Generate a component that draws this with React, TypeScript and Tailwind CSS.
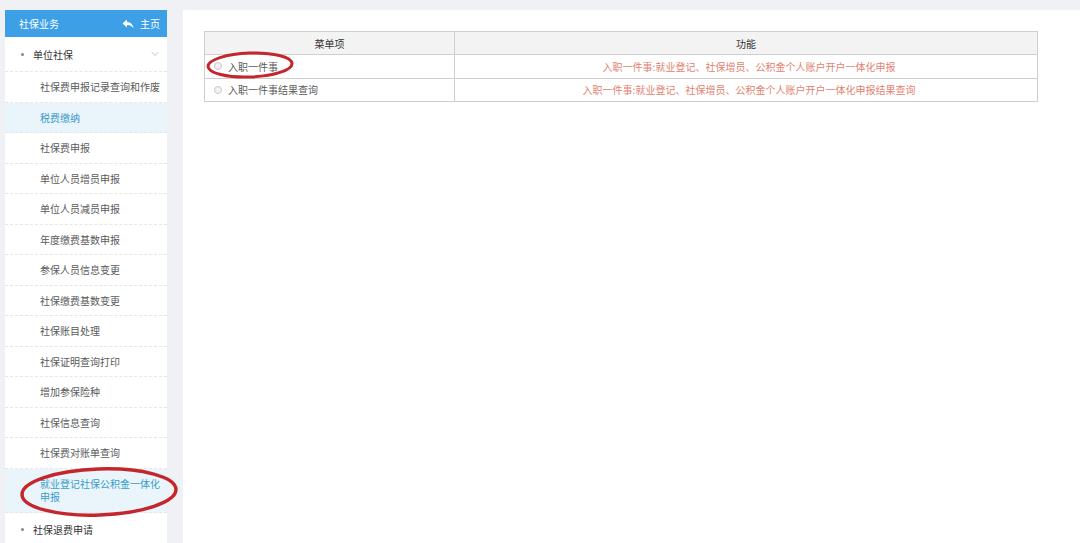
import React from 'react';
import { ChevronDown } from 'lucide-react';

const items: { label: string[]; active?: boolean }[] = [
  { label: ['社保费申报记录查询和作废'] },
  { label: ['税费缴纳'], active: true },
  { label: ['社保费申报'] },
  { label: ['单位人员增员申报'] },
  { label: ['单位人员减员申报'] },
  { label: ['年度缴费基数申报'] },
  { label: ['参保人员信息变更'] },
  { label: ['社保缴费基数变更'] },
  { label: ['社保账目处理'] },
  { label: ['社保证明查询打印'] },
  { label: ['增加参保险种'] },
  { label: ['社保信息查询'] },
  { label: ['社保费对账单查询'] },
  { label: ['就业登记社保公积金一体化', '申报'], active: true },
];

const rows = [
  { name: '入职一件事', desc: '入职一件事:就业登记、社保增员、公积金个人账户开户一体化申报' },
  { name: '入职一件事结果查询', desc: '入职一件事:就业登记、社保增员、公积金个人账户开户一体化申报结果查询' },
];

const ReplyIcon = () => (
  <svg width="12" height="10" viewBox="0 0 12 10" fill="white">
    <path d="M5 0.5 L0.5 4.5 L5 8.5 L5 6 C8 6 10 7 11.5 9.5 C11 5.5 8.5 3.2 5 3 Z" />
  </svg>
);

export default function App() {
  return (
    <div
      className="relative flex min-h-[543px] bg-[#eff1f4] pt-[10px] pl-[5px] text-[10px] text-[#5a5a5a]"
      style={{ fontFamily: '"Noto Sans CJK SC", "Noto Sans", sans-serif' }}
    >
      {/* sidebar */}
      <aside className="w-[162px] shrink-0 bg-white">
        <div className="flex h-[27px] items-center justify-between bg-[#3d9fe6] pl-[14px] pr-[7px] text-white">
          <span>社保业务</span>
          <span className="flex items-center gap-[6px]">
            <ReplyIcon />
            主页
          </span>
        </div>
        <div className="flex h-[35px] items-center border-b border-dashed border-[#e6e6e6] pl-[16px] pr-[6px] text-[#333]">
          <span className="mr-[9px] h-[3px] w-[3px] rounded-full bg-[#888]" />
          <span className="flex-1">单位社保</span>
          <ChevronDown className="h-[12px] w-[12px] text-[#aaa]" strokeWidth={1.5} />
        </div>
        {items.map((it, i) => (
          <div
            key={i}
            className={`flex flex-col justify-center border-b border-dashed border-[#e6e6e6] pl-[35px] pr-[4px] ${
              it.label.length > 1 ? 'h-[44.5px] leading-[13px]' : 'h-[30.5px]'
            } ${it.active ? 'bg-[#e9f4fb] text-[#3a9cc9]' : 'text-[#5a5a5a]'}`}
          >
            {it.label.map((l) => (
              <span key={l} className="whitespace-nowrap">
                {l}
              </span>
            ))}
          </div>
        ))}
        <div className="flex h-[32px] items-center pl-[16px] text-[#333]">
          <span className="mr-[9px] h-[3px] w-[3px] rounded-full bg-[#888]" />
          <span>社保退费申请</span>
        </div>
      </aside>

      {/* main */}
      <main className="ml-[16px] flex-1 bg-white pl-[21px] pt-[21px]">
        <table className="w-[834px] border-collapse border border-[#cfcfcf]">
          <thead>
            <tr className="h-[23px] bg-[#f3f3f3] text-[#333]">
              <th className="w-[250px] border border-[#cfcfcf] font-normal">菜单项</th>
              <th className="border border-[#cfcfcf] font-normal">功能</th>
            </tr>
          </thead>
          <tbody>
            {rows.map((r) => (
              <tr key={r.name} className="h-[23.5px]">
                <td className="border border-[#cfcfcf] pl-[9px]">
                  <span className="flex items-center gap-[6px]">
                    <span className="h-[8px] w-[8px] rounded-full border border-[#c8c8c8] bg-[#f2f2f2]" />
                    {r.name}
                  </span>
                </td>
                <td className="border border-[#cfcfcf] pl-[6px] text-center text-[#e37f70]">{r.desc}</td>
              </tr>
            ))}
          </tbody>
        </table>
      </main>

      {/* red annotation circles */}
      <svg className="pointer-events-none absolute left-0 top-0" width="1080" height="543">
        <ellipse cx="99" cy="492" rx="77" ry="23" fill="none" stroke="#c4262d" strokeWidth="3.5" transform="rotate(-2 99 492)" />
        <ellipse cx="250" cy="65" rx="42" ry="12" fill="none" stroke="#c4262d" strokeWidth="3" transform="rotate(-2 250 65)" />
      </svg>
    </div>
  );
}
